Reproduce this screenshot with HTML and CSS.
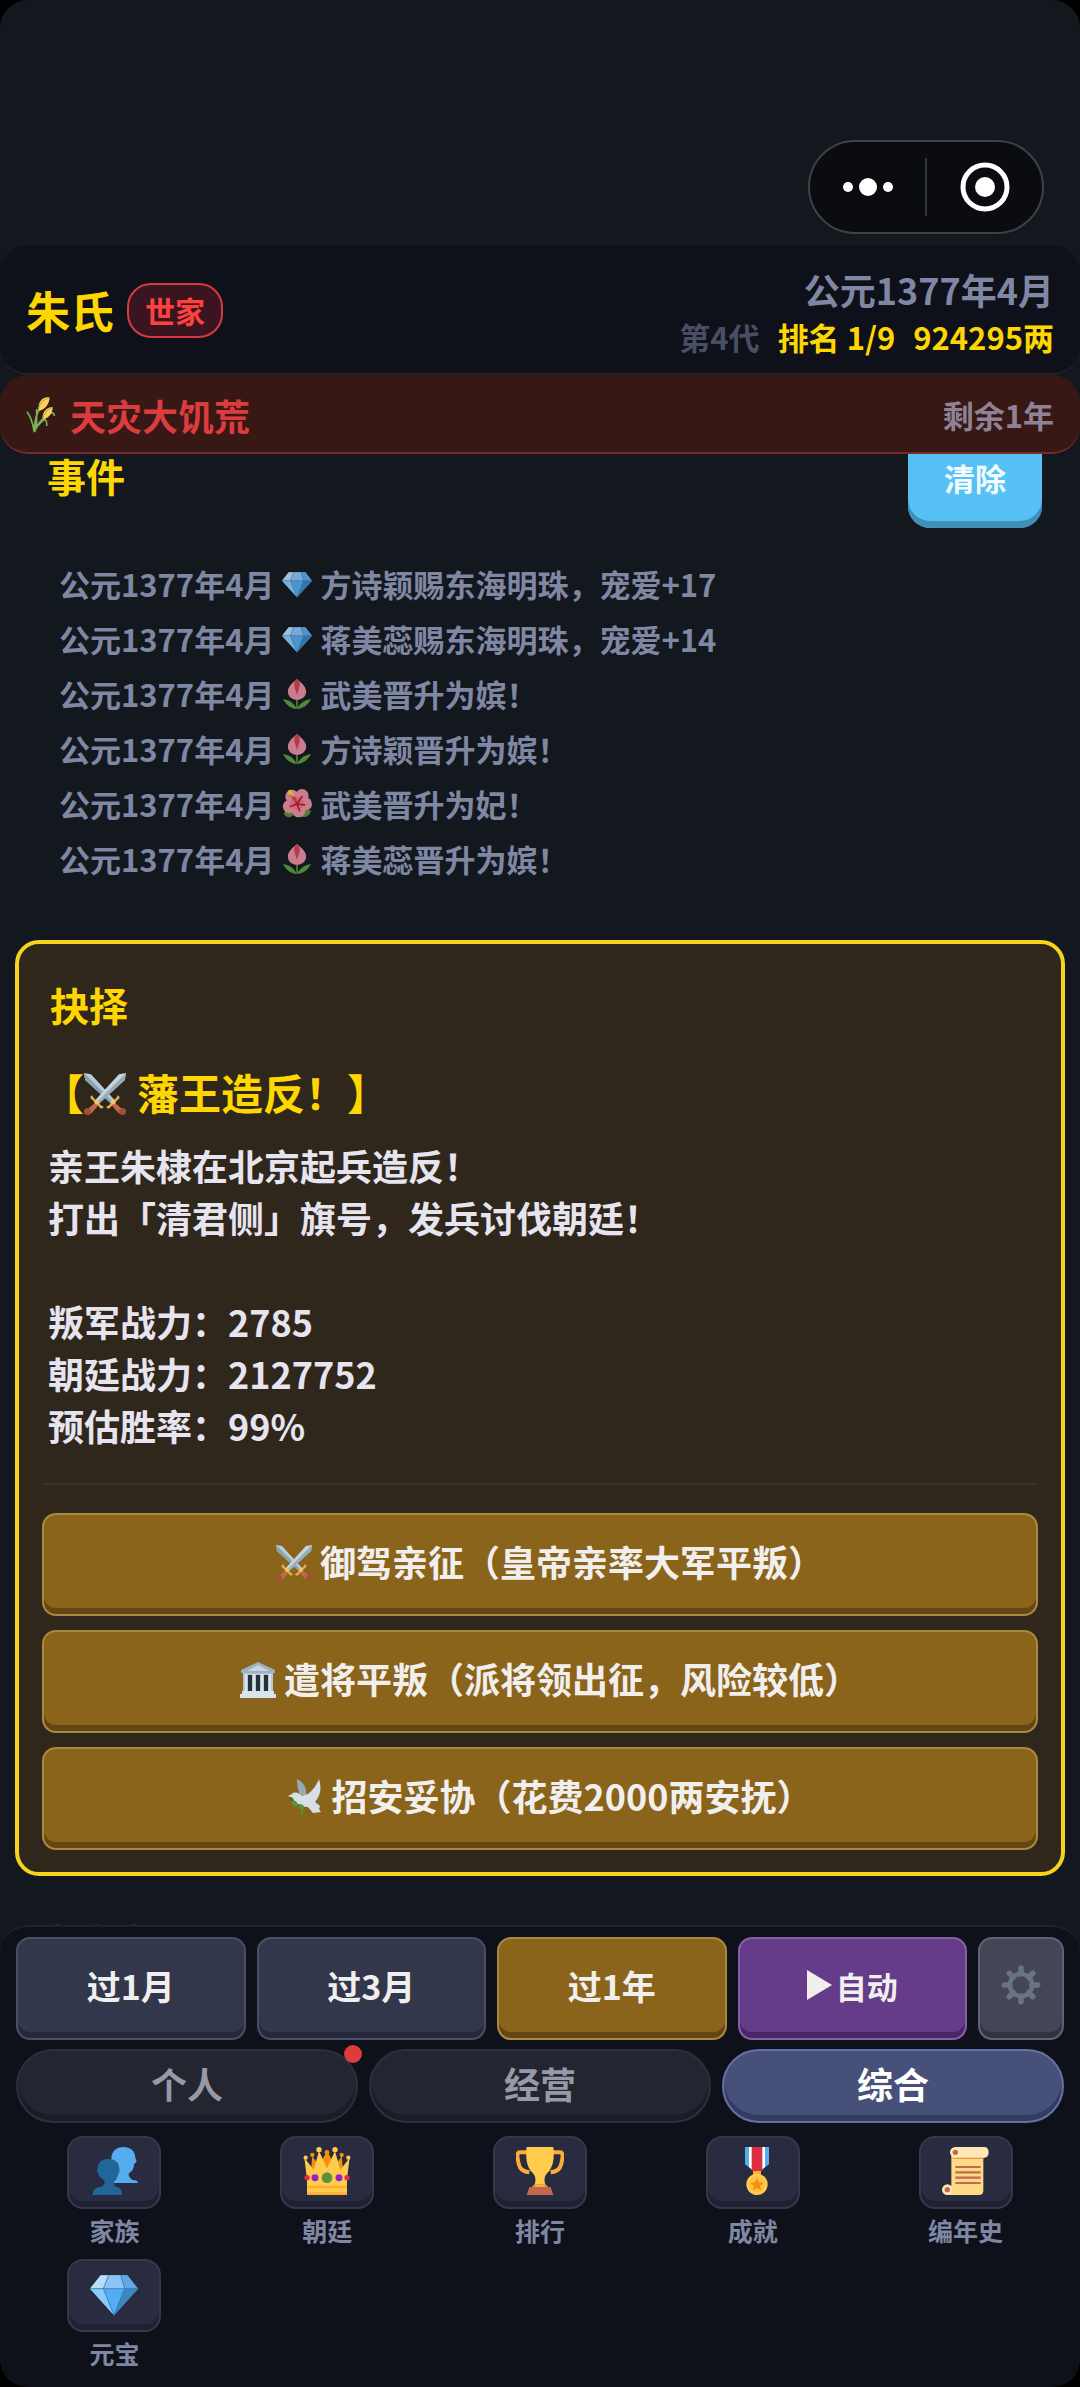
FILE: index.html
```html
<!DOCTYPE html>
<html lang="zh-CN">
<head>
<meta charset="utf-8">
<meta name="viewport" content="width=device-width, initial-scale=1">
<title>朱氏</title>
<link rel="stylesheet" href="styles.css">
</head>
<body>
<svg class="sprite" aria-hidden="true">
  <symbol id="gem" viewBox="0 0 36 36">
    <path d="M8 4h20l8 10-18 20L0 14z" fill="#55acee"/>
    <path d="M8 4h6l-4 10H0z" fill="#bbddf5"/><path d="M14 4h9l3 10H10z" fill="#8cc4f5"/><path d="M23 4h5l8 10H26z" fill="#5fa9e4"/>
    <path d="M0 14h10l8 20z" fill="#8ccaf7"/><path d="M26 14h10L18 34z" fill="#3d86c0"/>
    <path d="M0 14h36M14 4l-4 10 8 20 8-20-3-10" fill="none" stroke="#2f78b0" stroke-width=".6"/>
  </symbol>
  <symbol id="tulip" viewBox="0 0 36 36">
    <path d="M17 20h2v15h-2z" fill="#5c913b"/>
    <path d="M18 36C11 36 5 31 1 24c7 1 13 4 17 12 4-8 10-11 17-12-4 7-10 12-17 12z" fill="#5c9b3f"/>
    <path d="M18 0c3 3 11 8 11 15 0 5-4 10-11 10S7 20 7 15C7 8 15 3 18 0z" fill="#ea8fa0"/>
    <path d="M18 0c3 2 4 6 3 10l-3 9-3-9c-1-4 0-8 3-10z" fill="#d53f56"/>
  </symbol>
  <symbol id="hibiscus" viewBox="0 0 36 36">
    <path d="M2 29c4-4 9-3 13 0-3 6-10 7-13 0zM20 30c3-4 9-5 15-4-2 7-10 11-15 4z" fill="#5c913b"/>
    <circle cx="12" cy="9" r="8" fill="#ea8fa0"/><circle cx="24" cy="8" r="8" fill="#ea8fa0"/><circle cx="28" cy="18" r="8" fill="#ea8fa0"/><circle cx="20" cy="26" r="8" fill="#ea8fa0"/><circle cx="9" cy="21" r="8" fill="#ea8fa0"/><circle cx="18" cy="17" r="8" fill="#e8798e"/>
    <path d="M18 18L12 8M18 18l6-9M18 18l9 1M18 18l3 8M18 18l-8 3" stroke="#be1931" stroke-width="2" stroke-linecap="round"/>
    <path d="M17 15L11 6" stroke="#e23b4e" stroke-width="3"/><circle cx="10" cy="4" r="3" fill="#ffcc4d"/><circle cx="13" cy="7" r="2" fill="#ffcc4d"/>
  </symbol>
  <symbol id="wheat" viewBox="0 0 36 36" preserveAspectRatio="none">
    <path d="M10 35C8 26 6 19 1 15M10 35c0-12 3-20 8-25M10 35c4-8 9-13 15-16M12 31C14 22 12 16 13 12M15 28c8-8 10-6 10 1" fill="none" stroke="#77b255" stroke-width="2"/>
    <path d="M26 18c4-3 8-3 8 1" fill="none" stroke="#77b255" stroke-width="2"/>
    <path d="M15 14C14 6 18 0 28 0c1 6-5 13-13 14z" fill="#ffcf5a"/><path d="M20 22c-1-6 4-12 12-12 0 6-5 12-12 12z" fill="#ffcf5a"/>
    <path d="M15 14C15 7 20 3 28 0M20 22c1-5 5-9 12-12" fill="none" stroke="#77a83c" stroke-width="1"/>
  </symbol>
  <symbol id="swords" viewBox="0 0 36 36">
    <path d="M0 0l6 1 21 23-3 3L1 6z" fill="#b7ccd8"/><path d="M0 0l1 6 23 21 1-2z" fill="#8aa3b1"/>
    <path d="M29 19c2 1 2 3 0 4l-6 6c-1 2-3 2-4 0l2-1 7-7z" fill="#e8b04d"/><path d="M26 25l7 6-3 4-6-7z" fill="#c1694f"/><circle cx="33" cy="33" r="3" fill="#a0513b"/><circle cx="25" cy="25" r="2" fill="#f3c766"/>
    <path d="M36 0l-6 1L9 24l3 3L35 6z" fill="#c5d6e0"/><path d="M36 0l-1 6-23 21-1-2z" fill="#94abb8"/>
    <path d="M7 19c-2 1-2 3 0 4l6 6c1 2 3 2 4 0l-2-1-7-7z" fill="#e8b04d"/><path d="M10 25l-7 6 3 4 6-7z" fill="#c1694f"/><circle cx="3" cy="33" r="3" fill="#a0513b"/><circle cx="11" cy="25" r="2" fill="#f3c766"/>
  </symbol>
  <symbol id="temple" viewBox="0 0 36 36">
    <path d="M3 11h30v20H3z" fill="#b8c7d1"/><path d="M18 0l17 8v3H1V8z" fill="#9eb1bf"/><path d="M18 3l11 6H7z" fill="#c8d6df"/>
    <path d="M8 13h4v16H8zM16 13h4v16h-4zM24 13h4v16h-4z" fill="#25303a"/>
    <path d="M6 12v18M14 12v18M22 12v18M30 12v18" stroke="#dbe4ea" stroke-width="2"/><path d="M2 29h32v3h2v4H0v-4h2z" fill="#dce4eb"/>
  </symbol>
  <symbol id="dove" viewBox="0 0 36 36">
    <path d="M9 0c6 3 10 8 9 17l-6-1C10 11 9 6 9 0z" fill="#99aab5"/>
    <path d="M31 0c2 7 3 15-4 23l5 4-1 3 2 3-8 1-5-6C11 28 7 25 5 19l-5-2 4-2c3-3 7-1 10 2l6-2c5-4 8-8 11-15z" fill="#d5e1e7"/>
    <path d="M2 18c2 5 5 8 12 9" fill="none" stroke="#3e721d" stroke-width="2"/><path d="M4 22c5-1 6 2 5 6-4 0-6-2-5-6zM11 25c5 0 6 3 4 6-4 0-5-3-4-6zM13 31h2v5h-2z" fill="#5c913b"/>
  </symbol>
  <symbol id="people" viewBox="0 0 36 36">
    <path d="M17 27v-3c2-1 3-2 3-5-3-2-4-6-4-10 0-6 4-9 9-9s9 3 9 8l1 3-2 2c0 3-1 5-4 7 0 3 2 4 4 5 2 0 3 1 3 2z" fill="#55acee"/>
    <path d="M2 36c0-4 2-5 5-6 3 0 4-2 4-5-4-2-5-4-5-6l-1-1 1-3c0-4 4-6 8-6 5 0 8 3 8 7v3l-1 2c-1 2-1 4-3 5 0 3 1 4 3 4 2 1 3 3 3 6z" fill="#226699"/>
  </symbol>
  <symbol id="crown" viewBox="0 0 36 36">
    <path d="M6 17l1-10 5 7 6-11 6 11 5-7 1 10z" fill="#f4900c"/><circle cx="7" cy="6" r="1.6" fill="#f4900c"/><circle cx="18" cy="4" r="1.8" fill="#f4900c"/><circle cx="29" cy="6" r="1.6" fill="#f4900c"/>
    <path d="M3 36V24L1 8l7 9 4-14 6 13 6-13 4 14 7-9-2 16v12z" fill="#ffcc4d"/>
    <circle cx="2" cy="8" r="1.6" fill="#ffcc4d"/><circle cx="12" cy="2" r="2" fill="#ffcc4d"/><circle cx="24" cy="2" r="2" fill="#ffcc4d"/><circle cx="34" cy="8" r="1.6" fill="#ffcc4d"/>
    <path d="M3 29h30v2H3zM3 34h30v2H3z" fill="#ffac33"/>
    <circle cx="18" cy="23" r="4" fill="#5c913b"/><circle cx="9" cy="23" r="2.6" fill="#9a1fc9"/><circle cx="27" cy="23" r="2.6" fill="#9a1fc9"/><circle cx="3" cy="23" r="2" fill="#dd2e44"/><circle cx="33" cy="23" r="2" fill="#dd2e44"/>
  </symbol>
  <symbol id="trophy" viewBox="0 0 36 36">
    <path d="M9 4H3c-2 0-2 2-2 3 1 8 2 11 9 12M27 4h6c2 0 2 2 2 3-1 8-2 11-9 12" fill="none" stroke="#ffac33" stroke-width="3"/>
    <path d="M8 0h20c1 8 0 15-4 19-3 3-3 6-2 9l3 3H11l3-3c1-3 1-6-2-9C8 15 7 8 8 0z" fill="#ffcc4d"/>
    <path d="M14 28h8l1 2h3l2 6H8l2-6h3z" fill="#c1694f"/><path d="M14 28h8v2h-8z" fill="#ffac33"/>
  </symbol>
  <symbol id="medal" viewBox="-3 0 36 36">
    <path d="M9 0h18v13l-9 7-9-7z" fill="#55acee"/><path d="M12 0h12v15l-6 5-6-5z" fill="#fff"/><path d="M14 0h8v18h-8z" fill="#dd2e44"/>
    <path d="M15 18h6v5h-6z" fill="#ffac33"/><circle cx="18" cy="28" r="8" fill="#ffcc4d"/><circle cx="18" cy="28" r="6" fill="#ffc04a"/>
    <path d="M18 23l1.500 3.500 3.500.3-2.700 2.400.9 3.600-3.200-2-3.200 2 .9-3.600L13 26.800l3.500-.3z" fill="#f4900c"/>
  </symbol>
  <symbol id="scroll" viewBox="0 0 36 36">
    <path d="M7 4h24v28c0 3-1 4-4 4H4V29h3z" fill="#ffd983"/><path d="M10 0h22c4 0 4 8 0 8H10z" fill="#ffe8b6"/><path d="M8 8h23v1H8z" fill="#e39f3d"/>
    <circle cx="10" cy="4" r="4" fill="#ffe8b6"/><circle cx="10" cy="4" r="2" fill="#c1694f"/><circle cx="4" cy="32" r="4" fill="#ffe8b6"/><circle cx="4" cy="32" r="2" fill="#c1694f"/>
    <path d="M10 15h19M10 19h19M10 23h19M10 27h19" stroke="#c1694f" stroke-width="1.600"/>
  </symbol>
  <symbol id="gear" viewBox="0 0 36 36">
    <g stroke="#66757f" stroke-width="5" stroke-linecap="round"><path d="M18 3v5M18 28v5M3 18h5M28 18h5M7.400 7.400l3.500 3.500M25 25l3.600 3.600M28.600 7.400L25 11M11 25l-3.600 3.600"/></g>
    <circle cx="18" cy="18" r="10" fill="none" stroke="#66757f" stroke-width="4"/>
  </symbol>
</svg>
<div class="app">
  <div class="status">
    <div class="capsule">
      <button class="capsule-btn" aria-label="更多"><svg width="50" height="20" viewBox="0 0 50 20"><circle cx="5" cy="10" r="5"/><circle cx="25" cy="10" r="9"/><circle cx="45" cy="10" r="5"/></svg></button>
      <span class="capsule-line"></span>
      <button class="capsule-btn" aria-label="关闭"><svg width="50" height="50" viewBox="0 0 50 50"><circle cx="25" cy="25" r="22" fill="none" stroke="#fff" stroke-width="5"/><circle cx="25" cy="25" r="10"/></svg></button>
    </div>
  </div>

  <header class="top">
    <div class="clan"><h1 class="clan-name">朱氏</h1><span class="badge">世家</span></div>
    <div class="summary">
      <div class="date">公元1377年4月</div>
      <div class="stats"><span class="gen">第4代</span><span>排名 1/9</span><span>924295两</span></div>
    </div>
  </header>

  <div class="banner">
    <div class="banner-name"><svg class="ico-wheat"><use href="#wheat"/></svg>天灾大饥荒</div>
    <span class="left-time">剩余1年</span>
  </div>

  <main class="feed">
    <section class="events">
      <div class="events-head"><h2 class="heading">事件</h2><button class="clear">清除</button></div>
      <ul class="log">
        <li>公元1377年4月<svg><use href="#gem"/></svg>方诗颖赐东海明珠，宠爱+17</li>
        <li>公元1377年4月<svg><use href="#gem"/></svg>蒋美蕊赐东海明珠，宠爱+14</li>
        <li>公元1377年4月<svg><use href="#tulip"/></svg>武美晋升为嫔！</li>
        <li>公元1377年4月<svg><use href="#tulip"/></svg>方诗颖晋升为嫔！</li>
        <li>公元1377年4月<svg><use href="#hibiscus"/></svg>武美晋升为妃！</li>
        <li>公元1377年4月<svg><use href="#tulip"/></svg>蒋美蕊晋升为嫔！</li>
      </ul>
    </section>

    <section class="choice">
      <h2 class="heading choice-head">抉择</h2>
      <h3 class="choice-title">【<svg><use href="#swords"/></svg><span>藩王造反！】</span></h3>
      <p class="choice-text">亲王朱棣在北京起兵造反！<br>打出「清君侧」旗号，发兵讨伐朝廷！<br><br>叛军战力：2785<br>朝廷战力：2127752<br>预估胜率：99%</p>
      <div class="options">
        <button class="btn gold"><svg><use href="#swords"/></svg>御驾亲征（皇帝亲率大军平叛）</button>
        <button class="btn gold"><svg><use href="#temple"/></svg>遣将平叛（派将领出征，风险较低）</button>
        <button class="btn gold"><svg><use href="#dove"/></svg>招安妥协（花费2000两安抚）</button>
      </div>
    </section>

    <h2 class="heading next-head">朝年报</h2>
  </main>

  <footer class="dock">
    <div class="actions">
      <button class="btn slate">过1月</button>
      <button class="btn slate">过3月</button>
      <button class="btn gold">过1年</button>
      <button class="btn purple"><svg class="play" viewBox="0 0 25 30"><path d="M0 0l25 15L0 30z"/></svg>自动</button>
      <button class="btn grey" aria-label="设置"><svg class="gear"><use href="#gear"/></svg></button>
    </div>
    <nav class="tabs">
      <button class="tab">个人<span class="dot"></span></button>
      <button class="tab">经营</button>
      <button class="tab active">综合</button>
    </nav>
    <nav class="menu">
      <button class="item"><span class="tile"><svg><use href="#people"/></svg></span>家族</button>
      <button class="item"><span class="tile"><svg><use href="#crown"/></svg></span>朝廷</button>
      <button class="item"><span class="tile"><svg><use href="#trophy"/></svg></span>排行</button>
      <button class="item"><span class="tile"><svg><use href="#medal"/></svg></span>成就</button>
      <button class="item"><span class="tile"><svg><use href="#scroll"/></svg></span>编年史</button>
      <button class="item"><span class="tile"><svg><use href="#gem"/></svg></span>元宝</button>
    </nav>
  </footer>
</div>
</body>
</html>
```
FILE: styles.css
```css
* { box-sizing: border-box; margin: 0; padding: 0; }
body {
  background: #000;
  color: #e6e4ee;
  font-family: "Noto Sans CJK SC", sans-serif;
  font-weight: 700;
}
button { font: inherit; color: inherit; border: 0; background: none; cursor: pointer; }
ul { list-style: none; }
svg { flex: none; }
.sprite { display: none; }

.app {
  height: 100vh;
  display: flex;
  flex-direction: column;
  background: #13171e;
  border-radius: 28px;
  overflow: hidden;
}

/* system area with the mini-program capsule */
.status { padding: 140px 36px 11px; display: flex; justify-content: flex-end; }
.capsule {
  width: 236px;
  height: 94px;
  display: flex;
  align-items: center;
  background: #0b0c10;
  border: 2px solid #3e4145;
  border-radius: 47px;
}
.capsule-btn { flex: 1; display: flex; justify-content: center; fill: #fff; }
.capsule-line { width: 2px; height: 58px; background: #34373b; }

.top {
  height: 130px;
  padding: 8px 26px 0;
  display: flex;
  justify-content: space-between;
  align-items: center;
  background: #0e101a;
  border-bottom: 2px solid #20232e;
  border-radius: 28px;
}
.clan { padding-bottom: 6px; display: flex; align-items: center; gap: 13px; }
.clan-name { font-size: 44px; line-height: 60px; color: #ffd700; }
.badge {
  padding: 0 16px;
  font-size: 30px;
  line-height: 51px;
  color: #ff4040;
  background: #3a151f;
  border: 2px solid #d63a41;
  border-radius: 24px;
}
.summary { text-align: right; line-height: 47px; }
.date { font-size: 36px; color: #8087a2; }
.stats { display: flex; gap: 18px; font-size: 31px; color: #ffd700; }
.gen { color: #494e63; }

.banner {
  height: 79px;
  padding: 2px 26px 0;
  display: flex;
  justify-content: space-between;
  align-items: center;
  background: #381815;
  border-bottom: 2px solid #7b2a2b;
  border-radius: 28px;
}
.banner-name { display: flex; align-items: center; gap: 14px; font-size: 36px; color: #dc3c3e; }
.ico-wheat { width: 30px; height: 36px; }
.left-time { font-size: 31px; color: #8f8297; }

/* scrolled list between the banner and the dock */
.feed { flex: 1; min-height: 0; overflow: hidden; padding: 0 15px; }
.events { margin-top: -24px; padding: 0 23px 0 32px; }
.events-head { display: flex; justify-content: space-between; align-items: center; }
.events-head .heading { padding-bottom: 8px; }
.heading { font-size: 39px; line-height: 60px; color: #ffd700; }
.clear {
  width: 134px;
  height: 98px;
  padding-bottom: 4px;
  font-size: 31px;
  color: #f2fbff;
  background: #57c1f5;
  border-radius: 22px;
  box-shadow: inset 0 -7px #3f8fb6;
}
.log { margin-top: 28px; padding-left: 12px; font-size: 31px; line-height: 55px; color: #7f87a3; }
.log li { display: flex; align-items: center; gap: 8px; }
.log svg { width: 30px; height: 30px; opacity: .85; }

.choice {
  margin-top: 54px;
  padding: 30px 23px 22px;
  background: #2f261c;
  border: 4px solid #f6d31c;
  border-radius: 24px;
}
.choice-head { padding-left: 8px; }
.choice-title {
  margin-top: 28px;
  display: flex;
  align-items: center;
  font-size: 42px;
  line-height: 60px;
  color: #ffd700;
}
.choice-title svg { width: 42px; height: 42px; margin: 4px 11px 0 0; }
.choice-text { margin-top: 17px; padding-left: 6px; font-size: 36px; line-height: 52px; }
.options {
  margin-top: 32px;
  padding-top: 28px;
  border-top: 2px solid #3a3228;
  display: grid;
  gap: 14px;
}
.options .btn { padding-left: 20px; }
.options .btn svg { width: 36px; height: 36px; margin: 4px 8px 0 0; }
.next-head { margin-top: 35px; padding-left: 32px; color: #8a7a2c; }

.btn {
  height: 103px;
  padding-bottom: 7px;
  display: flex;
  justify-content: center;
  align-items: center;
  border-radius: 14px;
  border: 2px solid;
  font-size: 36px;
  color: #f1efee;
}
.gold { background: #8b641c; border-color: #a9883f; box-shadow: inset 0 -6px #664514; }
.slate { background: #33374b; border-color: #4a4f66; box-shadow: inset 0 -6px #25283a; }
.purple { background: #653c8a; border-color: #8461a5; box-shadow: inset 0 -6px #4a2669; }
.grey { background: #454558; border-color: #626274; box-shadow: inset 0 -6px #323241; }

.dock {
  padding: 10px 16px 18px;
  background: #0e101a;
  border-top: 2px solid #20232e;
  border-radius: 28px 28px 0 0;
}
.actions { display: grid; grid-template-columns: repeat(4, 1fr) 86px; gap: 11px; }
.actions .btn { font-size: 34px; }
.actions .purple { font-size: 31px; gap: 4px; }
.play { width: 25px; height: 30px; fill: #f1efee; }
.gear { width: 40px; height: 40px; }

.tabs { margin-top: 9px; display: grid; grid-template-columns: repeat(3, 1fr); gap: 11px; }
.tab {
  position: relative;
  height: 74px;
  padding-bottom: 7px;
  font-size: 36px;
  color: #9799a6;
  background: #232531;
  border: 2px solid #2d2f3b;
  border-radius: 37px;
  box-shadow: inset 0 -6px #1b1c27;
}
.tab.active { color: #fff; background: #475079; border-color: #6571a4; box-shadow: inset 0 -6px #323b60; }
.dot {
  position: absolute;
  top: -6px;
  right: -6px;
  width: 18px;
  height: 18px;
  border-radius: 50%;
  background: #df3b3b;
}

.menu { margin: 13px -8px 0; display: grid; grid-template-columns: repeat(5, 1fr); row-gap: 13px; }
.item {
  display: flex;
  flex-direction: column;
  align-items: center;
  gap: 5px;
  font-size: 25px;
  line-height: 32px;
  color: #7f87a3;
}
.tile {
  width: 94px;
  height: 73px;
  padding-bottom: 4px;
  display: flex;
  justify-content: center;
  align-items: center;
  background: #292c40;
  border: 2px solid #363849;
  border-radius: 16px;
  box-shadow: inset 0 -6px #202234;
}
.tile svg { width: 48px; height: 48px; }
```
